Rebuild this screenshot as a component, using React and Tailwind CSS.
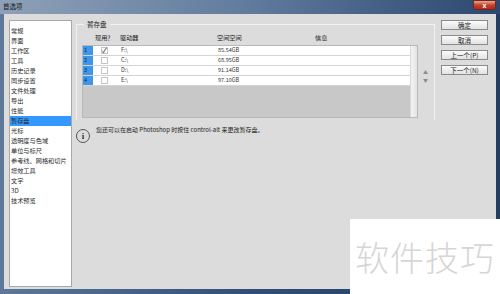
const menu = [
  "常规",
  "界面",
  "工作区",
  "工具",
  "历史记录",
  "同步设置",
  "文件处理",
  "导出",
  "性能",
  "暂存盘",
  "光标",
  "透明度与色域",
  "单位与标尺",
  "参考线、网格和切片",
  "增效工具",
  "文字",
  "3D",
  "技术预览",
];

const drives = [
  { n: 1, on: true, drive: "F:\\", free: "85.54GB" },
  { n: 2, on: false, drive: "C:\\", free: "68.95GB" },
  { n: 3, on: false, drive: "D:\\", free: "91.14GB" },
  { n: 4, on: false, drive: "E:\\", free: "97.10GB" },
];

const font = { fontFamily: '"Noto Sans CJK SC", "Liberation Sans", sans-serif' };

function Button({ children }) {
  return (
    <div className="h-[10px] w-[47px] border border-[#8a8a8a] bg-gradient-to-b from-[#fbfbfb] to-[#e2e2e2] flex items-center justify-center text-[6.5px] leading-none text-[#222]">
      {children}
    </div>
  );
}

export default function App() {
  return (
    <div
      className="relative w-[500px] h-[294px] overflow-hidden flex flex-col bg-gradient-to-r from-[#5d7898] via-[#2f4f78] to-[#243e62]"
      style={font}
    >
      {/* title bar */}
      <div className="h-[14px] flex items-start relative">
        <div className="absolute inset-0 bg-gradient-to-r from-[#9aabc0] via-[#6d86a6] to-[#2f4b73] opacity-80" />
        <span className="relative ml-[3px] mt-[2px] text-[6.5px] leading-[9px] text-[#1a1a1a]">首选项</span>
        <div className="relative ml-auto mr-[4px] w-[23px] h-[10px] rounded-b-[3px] bg-gradient-to-b from-[#e8a595] via-[#c8432b] to-[#b52a14] border border-[#6b2a20] flex items-center justify-center text-[7px] leading-none font-bold text-white">
          x
        </div>
      </div>

      {/* client area */}
      <div className="flex-1 mx-[4px] mb-[5px] bg-[#dcdcdc] flex">
        {/* left menu */}
        <div className="ml-[5px] mt-[6px] mb-[2px] w-[63px] bg-white border border-[#a8a8a8] pt-[5px] text-[6.2px] leading-[10px] text-[#2a2a2a]">
          {menu.map((m) => (
            <div
              key={m}
              className={m === "暂存盘" ? "bg-[#3399ff] pl-[1px] h-[10px] whitespace-nowrap" : "pl-[1px] h-[10px] whitespace-nowrap"}
            >
              {m}
            </div>
          ))}
        </div>

        {/* scratch disk group */}
        <div className="ml-[4px] mt-[10px] w-[359px] flex flex-col">
          <div className="relative h-[96px] border-t border-l border-r border-[#f2f2f2] pl-[5px] pr-[16px]">
            <span className="absolute -top-[5px] left-[7px] bg-[#dcdcdc] px-[3px] text-[6.5px] leading-[9px] text-[#1a1a1a]">
              暂存盘
            </span>
            {/* headers */}
            <div className="mt-[8px] h-[10px] flex text-[6.2px] leading-[10px] text-[#222]">
              <span className="ml-[13px] w-[25px]">现用？</span>
              <span className="w-[97px]">驱动器</span>
              <span className="w-[98px]">空间空间</span>
              <span>信息</span>
            </div>
            {/* table */}
            <div className="mt-[2px] flex h-[73px] border border-[#b8b8b8] bg-[#c8c8c8]">
              <div className="flex-1 flex flex-col">
                {drives.map((d) => (
                  <div key={d.n} className="h-[10px] flex bg-white border-b border-[#d4d4d4] text-[5.5px] leading-[9px] text-[#333]">
                    <span className="w-[10px] bg-[#3d96e8] text-[#0b2d66] pl-[1px]">{d.n}</span>
                    <span className="w-[28px] flex items-center pl-[8px]">
                      <span className="w-[7px] h-[7px] border border-[#c4c4c4] bg-white flex items-center justify-center text-[7px] leading-none text-[#111]">
                        {d.on ? "✓" : ""}
                      </span>
                    </span>
                    <span className="w-[97px]">{d.drive}</span>
                    <span>{d.free}</span>
                  </div>
                ))}
              </div>
              <div className="w-[7px] bg-gradient-to-r from-[#f4f4f4] to-[#e4e4e4] border-l border-[#d8d8d8]" />
            </div>
            <div className="absolute right-[6px] top-[43px] flex flex-col items-center text-[5px] leading-[8px] text-[#8c8c8c]">
              <span>▲</span>
              <span>▼</span>
            </div>
          </div>
          {/* info line */}
          <div className="mt-[4px] flex items-start">
            <div className="mt-[5px] w-[14px] h-[14px] rounded-full border border-[#555] flex items-center justify-center text-[9px] leading-none font-bold text-[#333]" style={{ fontFamily: '"Liberation Serif", serif' }}>
              i
            </div>
            <span className="ml-[6px] mt-[1px] text-[6px] leading-[9px] text-[#222] whitespace-nowrap">
              您还可以在启动 Photoshop 时按住 control-alt 来更改暂存盘。
            </span>
          </div>
        </div>

        {/* buttons */}
        <div className="ml-[6px] mt-[6px] flex flex-col gap-[5px]">
          <Button>确定</Button>
          <Button>取消</Button>
          <Button>上一个(P)</Button>
          <Button>下一个(N)</Button>
        </div>
      </div>

      {/* watermark */}
      <div className="absolute left-[350px] top-[219px] w-[150px] h-[75px] bg-white flex items-center justify-center">
        <span className="text-[34px] leading-none font-light text-[#d6d6d6] tracking-[1px]">软件技巧</span>
      </div>
    </div>
  );
}
